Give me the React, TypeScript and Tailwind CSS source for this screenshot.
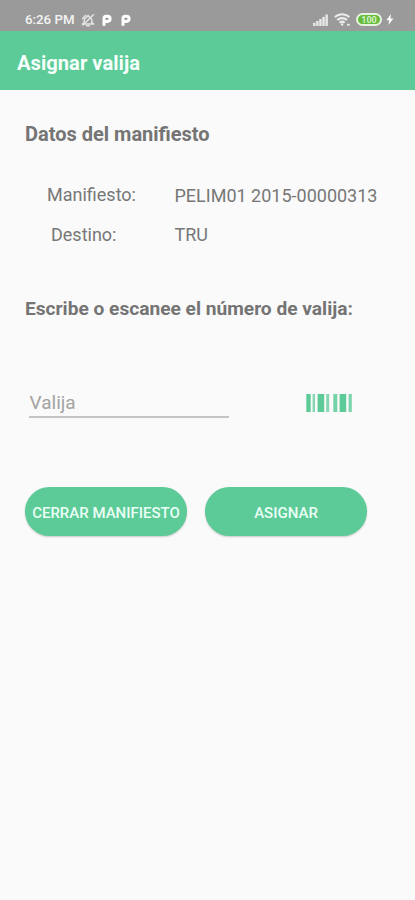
import type { ReactNode } from 'react';

function BellOffIcon() {
  return (
    <svg viewBox="0 0 14 14" className="h-[14px] w-[14px]" fill="none" stroke="#e3e3e3" strokeWidth="1.5" strokeLinecap="round" strokeLinejoin="round">
      <path d="M3.2 9.6V6.4L7 2.4l3.8 4v3.2l2 1.4H1.2z" />
      <path d="M5.6 12.7h2.8M1.6 5.6 4.6 2.4M2 12 12.4 1.8" />
    </svg>
  );
}

function ParkingIcon() {
  return (
    <svg viewBox="0 0 10 12" className="h-3 w-[10px]" fill="none" stroke="#fff" strokeWidth="3" strokeLinejoin="round">
      <path d="M2 11.8V4.4Q2 2.2 4.2 2.2h1.3a2.6 2.6 0 0 1 0 5.2H2.6" />
    </svg>
  );
}

function SignalIcon() {
  return (
    <svg viewBox="0 0 16 12" className="h-3 w-4" fill="#e6e6e6">
      <rect x="0" y="8.8" width="2.5" height="3.2" />
      <rect x="3.1" y="7" width="2.5" height="5" />
      <rect x="6.2" y="5" width="2.5" height="7" />
      <rect x="9.3" y="2.8" width="2.5" height="9.2" />
      <rect x="12.4" y="0.5" width="2.5" height="11.5" />
    </svg>
  );
}

function WifiIcon() {
  return (
    <svg viewBox="0 0 18 13" className="h-[13px] w-[18px]" fill="none" stroke="#ececec" strokeWidth="2.1">
      <path d="M.8 4a11 11 0 0 1 14.6 0M3.2 7a7.4 7.4 0 0 1 9.8 0M5.6 9.7a3.8 3.8 0 0 1 5 0" />
      <circle cx="8.1" cy="11.4" r="1.2" fill="#ececec" stroke="none" />
      <path d="M13 11.7h2.8" strokeWidth="1.8" />
    </svg>
  );
}

function BoltIcon() {
  return (
    <svg viewBox="0 0 8 11" className="h-[11px] w-2" fill="#fff">
      <path d="M5 0 .4 6.2h2.8L2.4 11 7.4 4.5H4.4z" />
    </svg>
  );
}

function BarcodeIcon() {
  return (
    <svg viewBox="0 0 46 18" className="h-[18px] w-[46px]" fill="#5ccb98">
      <rect x="0.3" width="4.4" height="18" />
      <rect x="6.6" width="2.4" height="18" opacity="0.75" />
      <rect x="11.6" width="6.6" height="18" />
      <rect x="20.2" width="3" height="18" opacity="0.75" />
      <rect x="27.3" width="4" height="18" opacity="0.85" />
      <rect x="33.6" width="6.6" height="18" />
      <rect x="42.6" width="3.2" height="18" opacity="0.8" />
    </svg>
  );
}

function StatusBar() {
  return (
    <div className="flex h-[31px] items-center bg-[#9a9a9a] pt-2 pr-[21px] pl-[25px] text-white">
      <span className="w-[56px] pt-px text-[13.3px] leading-none font-medium whitespace-nowrap text-[#f4f4f4]">6:26 PM</span>
      <BellOffIcon />
      <div className="ml-[7px] flex gap-[9px]">
        <ParkingIcon />
        <ParkingIcon />
      </div>
      <div className="ml-auto flex items-center">
        <SignalIcon />
        <div className="ml-[5px] flex">
          <WifiIcon />
        </div>
        <div className="ml-[4px] flex h-[13px] w-[26px] items-center justify-center rounded-full border-2 border-[#e6f3df] bg-[#65bd3c] pt-px text-[9px] leading-none font-bold text-[#d6f0c8]">
          100
        </div>
        <div className="ml-[4px]">
          <BoltIcon />
        </div>
      </div>
    </div>
  );
}

interface FieldProps {
  label: string;
  value: string;
  className: string;
  valueClass: string;
}

function Field({ label, value, className, valueClass }: FieldProps) {
  return (
    <div className={`flex h-10 items-center text-[18px] text-[#777] ${className}`}>
      <span className="flex-1 whitespace-nowrap">{label}</span>
      <span className={`w-[240.5px] whitespace-nowrap ${valueClass}`}>{value}</span>
    </div>
  );
}

function PillButton({ children }: { children: ReactNode }) {
  return (
    <button className="h-[49px] w-[162px] rounded-full bg-[#5ccb98] pt-[3px] text-[15px] font-medium whitespace-nowrap text-[#eafff5] shadow-[0_1px_2px_rgba(0,0,0,0.2)]">
      {children}
    </button>
  );
}

export default function App() {
  return (
    <div className="flex h-[900px] w-[415px] flex-col overflow-hidden bg-[#fafafa] font-[Roboto,sans-serif]">
      <StatusBar />
      <header className="flex h-[59px] items-center bg-[#5ccb98] pt-[5px] pl-[17px]">
        <h1 className="text-[20.2px] font-bold text-[#f6fffb]">Asignar valija</h1>
      </header>
      <main className="flex flex-col pt-[30px]">
        <h2 className="pl-[25px] text-[20px] leading-7 font-bold whitespace-nowrap text-[#747474]">Datos del manifiesto</h2>
        <div className="pt-[26px]">
          <Field label="Manifiesto:" value="PELIM01 2015-00000313" className="pl-[47px]" valueClass="pt-[2px]" />
          <Field label="Destino:" value="TRU" className="pl-[51px]" valueClass="" />
        </div>
        <h2 className="pt-[41px] pl-[25px] text-[19.15px] leading-7 font-bold whitespace-nowrap text-[#747474]">
          Escribe o escanee el número de valija:
        </h2>
        <div className="flex items-center pt-[65px] pl-[29px]">
          <div className="flex h-[30px] w-[200px] items-center border-b-2 border-[#c4c4c4] pt-[2px] pl-[0.5px] text-[19px] text-[#a2a2a2]">Valija</div>
          <div className="ml-[77px]">
            <BarcodeIcon />
          </div>
        </div>
        <div className="flex gap-[18px] pt-[69px] pl-[25px]">
          <PillButton>CERRAR MANIFIESTO</PillButton>
          <PillButton>ASIGNAR</PillButton>
        </div>
      </main>
    </div>
  );
}
